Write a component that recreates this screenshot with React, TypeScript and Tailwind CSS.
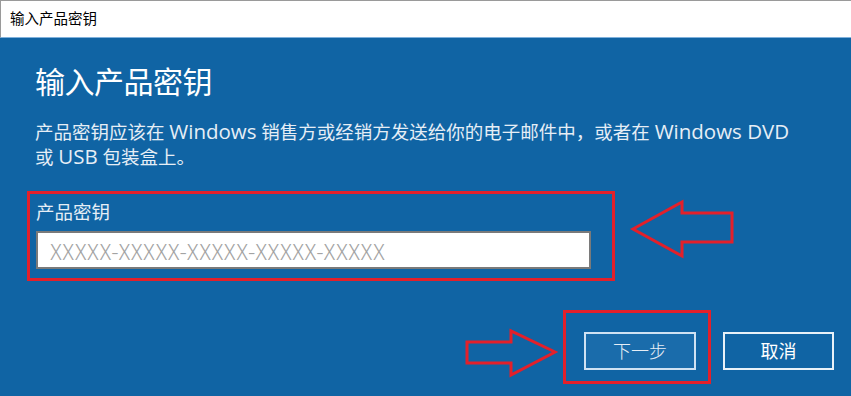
import React from "react";

const cjk = { fontFamily: '"Open Sans", "Noto Sans CJK SC", sans-serif' };

function Arrows() {
  // red annotation arrows drawn over the dialog
  return (
    <svg className="absolute inset-0 pointer-events-none" width="851" height="396" viewBox="0 0 851 396">
      <polygon
        points="633,229 682,202 682,213 732,213 732,242 682,242 682,256"
        fill="none"
        stroke="#e3202a"
        strokeWidth="3"
        strokeLinejoin="miter"
      />
      <polygon
        points="467,342 511,342 511,331 555,352 511,375 511,363 467,363"
        fill="none"
        stroke="#e3202a"
        strokeWidth="3"
        strokeLinejoin="miter"
      />
    </svg>
  );
}

export default function App() {
  return (
    <div className="relative w-[851px] h-[396px] overflow-hidden bg-[#1064a4] text-white" style={cjk}>
      {/* title bar */}
      <div className="h-[38px] bg-white border-t border-l border-[#9a9a9a] border-b border-b-[#7fb1dc]">
        <div className="pl-[9px] pt-[8px] text-[14.5px] leading-[20px] text-black">输入产品密钥</div>
      </div>

      <div className="pl-[35px] pt-[25px]">
        <h1 className="text-[30px] leading-[38px] font-normal tracking-[-0.5px]">输入产品密钥</h1>
        <p className="mt-[18px] text-[18.5px] leading-[24px] text-[#e6eef6] whitespace-nowrap">
          产品密钥应该在 <span className="text-[20.5px]">Windows</span> 销售方或经销方发送给你的电子邮件中，或者在{" "}
          <span className="text-[20.5px]">Windows DVD</span>
          <br />
          或 <span className="text-[20.5px]">USB</span> 包装盒上。
        </p>
      </div>

      {/* key field */}
      <div className="ml-[27px] mt-[22px] w-[588px] h-[90px] border-[3px] border-[#e3202a] pl-[6px] pt-[6px]">
        <div className="text-[18.5px] leading-[24px] text-[#e6eef6]">产品密钥</div>
        <div className="mt-[7px] w-[555px] h-[38px] bg-white border-2 border-[#7a7a7a] flex items-center pl-[12px]">
          <span
            className="text-[22px] leading-[28px] text-[#a3a3a3] font-light tracking-[0.45px]"
            style={{ fontFamily: '"Noto Sans CJK SC", sans-serif' }}
          >
            XXXXX-XXXXX-XXXXX-XXXXX-XXXXX
          </span>
        </div>
      </div>

      {/* buttons */}
      <div className="flex items-start mt-[29px]">
        <div className="ml-[563px] w-[148px] h-[74px] border-[3px] border-[#e3202a] pl-[18px] pt-[19px]">
          <button className="w-[112px] h-[38px] border-2 border-[#cfe2f3] bg-[#1a6cab] text-[18px] text-[#e6eef6] font-light flex items-center justify-center">
            下一步
          </button>
        </div>
        <button className="ml-[12px] mt-[22px] w-[111px] h-[38px] border-2 border-[#e8f1f8] bg-[#1064a4] text-[18px] text-white flex items-center justify-center">
          取消
        </button>
      </div>

      <Arrows />
    </div>
  );
}
